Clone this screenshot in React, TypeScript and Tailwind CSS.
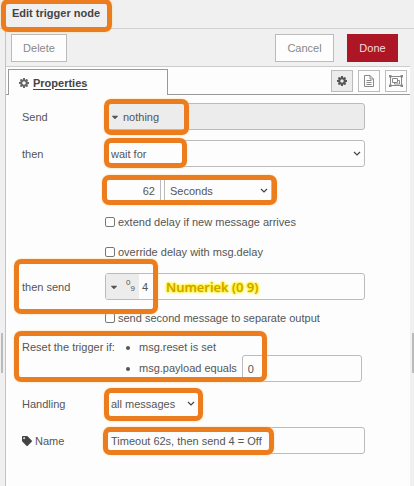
import type { ReactNode } from 'react'
import { FaCaretDown, FaTag } from 'react-icons/fa'
import clsx from 'clsx'

const field = 'h-[27px] rounded-[3px] border border-[#bbb] text-[#555] outline-none'

interface IconProps {
  className?: string
}

function CogIcon({ className }: IconProps) {
  return (
    <svg viewBox="0 128 1536 1536" fill="currentColor" className={className}>
      <path d="M1024 896q0-106-75-181t-181-75-181 75-75 181 75 181 181 75 181-75 75-181zm512-109v222q0 12-8 23t-20 13l-185 28q-19 54-39 91 35 50 107 138 10 12 10 25t-9 23q-27 37-99 108t-94 71q-12 0-26-9l-138-108q-44 23-91 38-16 136-29 186-7 28-36 28h-222q-14 0-24.500-8.500t-11.500-21.500l-28-184q-49-16-90-37l-141 107q-10 9-25 9-14 0-25-11-126-114-165-168-7-10-7-23 0-12 8-23 15-21 51-66.500t54-70.500q-27-50-41-99l-183-27q-13-2-21-12.500t-8-23.500v-222q0-12 8-23t19-13l186-28q14-46 39-92-40-57-107-138-10-12-10-24 0-10 9-23 26-36 98.500-107.500t94.500-71.500q13 0 26 10l138 107q44-23 91-38 16-136 29-186 7-28 36-28h222q14 0 24.500 8.500t11.500 21.500l28 184q49 16 90 37l142-107q9-9 24-9 13 0 25 10 129 119 165 170 7 8 7 22 0 12-8 23-15 21-51 66.500t-54 70.500q26 50 41 98l183 28q13 2 21 12.500t8 23.500z" />
    </svg>
  )
}

function FileIcon({ className }: IconProps) {
  return (
    <svg viewBox="0 0 12 12" fill="none" stroke="currentColor" className={className}>
      <path d="M1.500.5h5.500l3.500 3.500v7.500h-9zM7 .5v3.500h3.500M3.500 5.500h5M3.500 7.500h5M3.500 9.500h5" />
    </svg>
  )
}

function GroupIcon({ className }: IconProps) {
  return (
    <svg viewBox="0 0 14 12" fill="none" stroke="currentColor" className={className}>
      <path d="M2 1.500h10M2 10.500h10M1.500 2v8M12.500 2v8" />
      <path d="M3.500 3.500h5v4h-5zM8.500 5.500h2v3.500h-5v-1.500" />
      <path
        d="M0 0h2.500v2.500h-2.500zM11.500 0h2.500v2.500h-2.500zM0 9.500h2.500v2.500h-2.500zM11.500 9.500h2.500v2.500h-2.500z"
        fill="currentColor"
        stroke="none"
      />
    </svg>
  )
}

function Mark({ className }: { className: string }) {
  return (
    <span
      aria-hidden="true"
      className={clsx(
        'pointer-events-none absolute z-10 rounded-[7px] border-5 border-[#ec7d1e] shadow-[0_0_2px_#ffcf80]',
        className
      )}
    />
  )
}

interface RowProps {
  label?: ReactNode
  htmlFor?: string
  className?: string
  children: ReactNode
}

function Row({ label, htmlFor, className, children }: RowProps) {
  return (
    <div className={clsx('relative flex h-[27px] items-center', className)}>
      <label htmlFor={htmlFor} className="w-[83px] shrink-0">
        {label}
      </label>
      {children}
    </div>
  )
}

interface SelectProps {
  id: string
  value: string
  className?: string
  bare?: boolean
  label?: string
}

function Select({ id, value, className, bare, label }: SelectProps) {
  return (
    <div className={clsx('relative', className)}>
      <select
        id={id}
        aria-label={label}
        defaultValue={value}
        className={clsx(field, 'block w-full appearance-none pr-5 pl-[5px]', bare && 'border-transparent')}
      >
        <option>{value}</option>
      </select>
      <svg
        viewBox="0 0 8 6"
        className="pointer-events-none absolute top-[11px] right-1 h-[6px] w-2 fill-none stroke-[#444]"
      >
        <path d="M1 1l3 3 3-3" strokeWidth="1.2" />
      </svg>
    </div>
  )
}

function Check({ id, text, className }: { id: string; text: string; className?: string }) {
  return (
    <div className={clsx('flex h-[27px] items-center gap-[3px] pl-[83px]', className)}>
      <input
        id={id}
        type="checkbox"
        className="size-[10px] appearance-none rounded-[2px] border border-[#777] bg-white checked:bg-[#555]"
      />
      <label htmlFor={id}>{text}</label>
    </div>
  )
}

const tabButtons = [
  { name: 'Properties', Icon: CogIcon, active: true, size: 'size-2.5' },
  { name: 'Description', Icon: FileIcon, active: false, size: 'size-3' },
  { name: 'Appearance', Icon: GroupIcon, active: false, size: 'h-3 w-3.5' },
]

export default function App() {
  return (
    <div className="relative flex min-h-screen flex-col bg-[#f0f0f0] font-['Liberation_Sans',Arial,sans-serif] text-[11px] leading-4 text-[#555]">
      <header className="relative flex h-[29px] items-center border-b border-[#d0d0d0] pb-0.5 pl-3">
        <h1 className="font-bold text-[#444]">Edit trigger node</h1>
        <Mark className="-top-px left-px h-[33px] w-[111px]" />
      </header>

      <main className="mr-1 ml-[5px] flex flex-1 flex-col border-l border-[#c4c4c4]">
        <div className="flex h-[38px] items-center gap-[13px] border-b border-[#ccc] pr-3 pl-[5px]">
          <button className="h-7 w-14 border border-[#bbb] bg-[#fdfdfd] text-[#888]">Delete</button>
          <button className="ml-auto h-7 w-[59px] border border-[#bbb] bg-[#fdfdfd] text-[#888]">
            Cancel
          </button>
          <button className="h-7 w-[51px] bg-[#ad1625] text-[#f4dcde]">Done</button>
        </div>

        <div className="flex flex-1 flex-col bg-[#fdfdfd]">
          <div className="flex h-7 items-end">
            <span className="w-0.5 border-b border-[#999]" />
            <a
              href="#properties"
              className="flex h-[26px] w-40 items-center gap-1 border border-b-0 border-[#999] pl-2.5 font-bold text-[#444]"
            >
              <CogIcon className="size-2.5 text-[#666]" />
              <span className="underline underline-offset-2">Properties</span>
            </a>
            <div className="flex h-full flex-1 items-center justify-end gap-[5px] border-b border-[#999] pt-px pr-[3px]">
              {tabButtons.map(({ name, Icon, active, size }) => (
                <button
                  key={name}
                  aria-label={name}
                  className={clsx(
                    'flex size-[22px] items-center justify-center border border-[#bbb]',
                    active ? 'bg-[#ececec] text-[#555]' : 'text-[#888]'
                  )}
                >
                  <Icon className={size} />
                </button>
              ))}
            </div>
          </div>

          <form className="pt-2 pr-[45px] pl-4">
            <Row label="Send">
              <button
                type="button"
                className={clsx(field, 'flex flex-1 items-center gap-[3px] bg-[#ececec] pl-1')}
              >
                <FaCaretDown className="size-2.5" />
                nothing
              </button>
              <Mark className="-top-1 left-[82px] h-9 w-[85px]" />
            </Row>

            <Row label="then" htmlFor="then" className="mt-2.5">
              <Select id="then" value="wait for" className="flex-1" />
              <Mark className="-top-0.5 left-[82px] h-[30px] w-[83px]" />
            </Row>

            <Row className="mt-2.5">
              <input
                aria-label="Delay"
                defaultValue="62"
                className={clsx(field, 'w-14 pr-[5px] text-right')}
              />
              <Select id="units" label="Units" value="Seconds" className="ml-[3px] w-[108px]" />
              <Mark className="-top-0.5 left-[80px] h-[30px] w-[175px]" />
            </Row>

            <Check id="extend" text="extend delay if new message arrives" className="mt-1" />
            <Check id="override" text="override delay with msg.delay" className="mt-[3px]" />

            <Row label="then send" htmlFor="payload" className="mt-2">
              <div className={clsx(field, 'flex flex-1 overflow-hidden')}>
                <button
                  type="button"
                  aria-label="Number"
                  className="flex w-[33px] items-center gap-[7px] bg-[#ececec] pl-[3px]"
                >
                  <FaCaretDown className="size-2.5" />
                  <span className="flex text-[8px] leading-[8px]">
                    <span className="-mt-0.5">0</span>
                    <span className="mt-1">9</span>
                  </span>
                </button>
                <input
                  id="payload"
                  defaultValue="4"
                  className="min-w-0 flex-1 pl-[3px] outline-none"
                />
              </div>
              <span className="absolute left-36 font-['Open_Sans',sans-serif] text-[13px] leading-4 font-semibold text-[#cfa000] [text-shadow:0_0_2px_#fff000,0_0_2px_#fff000,0_0_3px_#fff000,0_0_3px_#fff000]">
                Numeriek (0 9)
              </span>
              <Mark className="-top-3.5 -left-2 h-[55px] w-36" />
            </Row>

            <Check id="second" text="send second message to separate output" className="mt-1" />

            <div className="relative mt-1.5 flex leading-[21px]">
              <span className="w-[104px] shrink-0">Reset the trigger if:</span>
              <ul className="flex-1 pr-[3px]">
                <li className="flex h-[21px] items-center gap-[5px]">
                  <span className="size-1 rounded-full bg-[#555]" />
                  <span className="pl-1">msg.reset is set</span>
                </li>
                <li className="flex h-[21px] items-center gap-[5px]">
                  <span className="size-1 rounded-full bg-[#555]" />
                  <label htmlFor="reset" className="shrink-0 pl-1">
                    msg.payload equals
                  </label>
                  <input
                    id="reset"
                    defaultValue="0"
                    className={clsx(field, 'min-w-0 flex-1 pl-[5px]')}
                  />
                </li>
              </ul>
              <Mark className="-top-1.5 -left-2 h-[51px] w-[253px]" />
            </div>

            <Row label="Handling" htmlFor="handling" className="mt-[11px]">
              <Select id="handling" value="all messages" bare className="w-[94px]" />
              <Mark className="-top-0.5 left-[82px] h-[33px] w-[99px]" />
            </Row>

            <Row
              label={
                <span className="flex items-center gap-[3px]">
                  <FaTag className="size-[10px] text-[#444]" />
                  Name
                </span>
              }
              htmlFor="name"
              className="mt-2.5"
            >
              <input
                id="name"
                defaultValue="Timeout 62s, then send 4 = Off"
                className={clsx(field, 'min-w-0 flex-1 pl-[5px]')}
              />
              <Mark className="top-0 left-[81px] h-7 w-[171px]" />
            </Row>
          </form>
        </div>
      </main>

      {/* drag handles of the neighbouring panes */}
      <span className="absolute top-[333px] left-px h-10 w-0.5 bg-[#bbb]" />
      <span className="absolute top-[333px] right-0 h-10 w-0.5 bg-[#bbb]" />
    </div>
  )
}
